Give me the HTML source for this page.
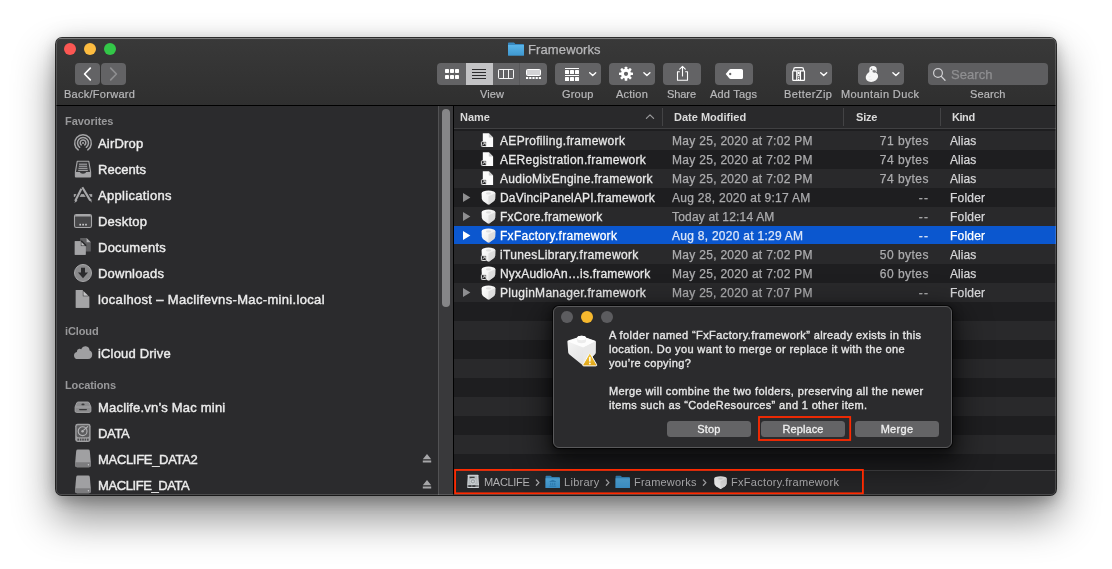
<!DOCTYPE html>
<html lang="en">
<head>
<meta charset="utf-8">
<title>Frameworks</title>
<style>
*{box-sizing:border-box;margin:0;padding:0}
html,body{width:1112px;height:569px;overflow:hidden;background:#fff}
body{font-family:"Liberation Sans",sans-serif;position:relative;color:#dfdfdf;-webkit-font-smoothing:antialiased}
.a{position:absolute}
.t{position:absolute;white-space:nowrap;line-height:1}
/* window */
#shadow{left:56px;top:38px;width:1000px;height:457px;border-radius:6px;
  box-shadow:0 0 0 1px rgba(0,0,0,.8),0 22px 40px 2px rgba(0,0,0,.43),0 6px 14px rgba(0,0,0,.2),0 0 22px rgba(0,0,0,.1)}
#win{left:56px;top:38px;width:1000px;height:457px;border-radius:5px;overflow:hidden;background:#1e1e20}
#pg{left:-56px;top:-38px;width:1112px;height:569px;will-change:transform}
/* toolbar */
#tb{left:56px;top:38px;width:1000px;height:67px;background:linear-gradient(#393939,#2f2f2f);box-shadow:inset 0 1px 0 rgba(255,255,255,.22)}
#tbline{left:56px;top:105px;width:1000px;height:1px;background:#000}
.tl{width:12px;height:12px;border-radius:50%;top:43px}
.btn{background:#636365;border-radius:4px;top:63px;height:22px}
.lbl{font-size:11px;color:#b8b8ba;top:89px;-webkit-text-stroke:.2px #b8b8ba}
/* sidebar */
#sb{left:56px;top:106px;width:382px;height:389px;background:#2b2b2d}
#trk{left:438px;top:106px;width:15px;height:389px;background:#39393b;border-left:1px solid #525254}
#thumb{left:442px;top:109px;width:8px;height:198px;border-radius:4px;background:#868688}
#vline{left:453px;top:106px;width:1px;height:389px;background:#000}
.sh{font-size:11px;font-weight:bold;color:#98989a;left:65px}
.si{font-size:13px;color:#ececec;left:98px;-webkit-text-stroke:.4px #ececec}
.ic{position:absolute}
/* list */
#hdr{left:454px;top:106px;width:602px;height:23px;background:#29292b;border-bottom:1px solid #404042}
.hd{font-size:11px;font-weight:bold;color:#dadada;top:112px}
.hdiv{top:108px;width:1px;height:18px;background:#434345}
.row{left:454px;width:602px;height:19px}
.row.o{background:#29292b}
.row.e{background:#1e1e20}
.row.sel{background:#0b57cf}
.nm{font-size:12px;color:#e8e8e8;left:500px;-webkit-text-stroke:.3px #e8e8e8}
.dt{font-size:12px;color:#acacae;left:672px;-webkit-text-stroke:.25px #acacae}
.sz{font-size:12px;color:#acacae;right:183px;-webkit-text-stroke:.25px #acacae}
.kd{font-size:12px;color:#d6d6d8;left:950px;-webkit-text-stroke:.25px #d6d6d8}
.sel-t{color:#fff;-webkit-text-stroke-color:#fff}
.dt.sel-t,.sz.sel-t{color:#dce6f8;-webkit-text-stroke-color:#dce6f8}
/* path bar */
#pb{left:454px;top:470px;width:602px;height:25px;background:#262628;border-top:1px solid #464648}
.pt{font-size:11px;color:#b0b0b2;top:477px}
/* dialog */
#dlg{left:553px;top:306px;width:399px;height:142px;border-radius:6px;background:#2b2b2d;border:1px solid #59595b;
  box-shadow:0 0 0 1px rgba(0,0,0,.65),0 12px 30px 8px rgba(0,0,0,.5),0 3px 10px 2px rgba(0,0,0,.45)}
.dl{width:12px;height:12px;border-radius:50%;top:311px}
.dtx{font-size:11px;color:#e6e6e6;left:609px;-webkit-text-stroke:.35px #e6e6e6}
.db{top:421px;width:84px;height:16px;border-radius:3.5px;background:#646466;font-size:11px;color:#f0f0f0;text-align:center;line-height:16px;-webkit-text-stroke:.3px #f0f0f0}
</style>
</head>
<body>
<div id="shadow" class="a"></div>
<div id="win" class="a"><div id="pg" class="a">

<!-- TOOLBAR -->
<div id="tb" class="a"></div>
<div id="tbline" class="a"></div>
<div class="a tl" style="left:64px;background:#fc5753"></div>
<div class="a tl" style="left:84px;background:#fdbc40"></div>
<div class="a tl" style="left:104px;background:#33c748"></div>
<!-- back/forward -->
<div class="a btn" style="left:75px;width:25px"></div>
<div class="a btn" style="left:101px;width:25px"></div>
<svg class="a" style="left:75px;top:63px" width="25" height="22" viewBox="0 0 25 22"><path d="M15.3 5.2 L9.6 11 L15.3 16.8" fill="none" stroke="#fff" stroke-width="1.7" stroke-linecap="round" stroke-linejoin="round"/></svg>
<svg class="a" style="left:101px;top:63px" width="25" height="22" viewBox="0 0 25 22"><path d="M9.7 5.2 L15.4 11 L9.7 16.8" fill="none" stroke="#8e8e90" stroke-width="1.7" stroke-linecap="round" stroke-linejoin="round"/></svg>
<div class="t lbl" id="l_bf" style="letter-spacing:0.270px;left:64px">Back/Forward</div>

<!-- title -->
<svg class="a" style="left:508px;top:42px" width="16" height="14" viewBox="0 0 16 14"><defs><linearGradient id="gfo" x1="0" y1="0" x2="0" y2="1"><stop offset="0" stop-color="#5ab5e9"/><stop offset="1" stop-color="#3f98d0"/></linearGradient></defs><path d="M0 1.2 Q0 0.4 .8 0.4 L5.6 0.4 Q6.2 0.4 6.6 1 L7.2 1.9 L15.2 1.9 Q16 1.9 16 2.7 L16 13 Q16 13.6 15.4 13.6 L.6 13.6 Q0 13.6 0 13 Z" fill="#3889c0"/><path d="M0 2.9 L16 2.9 L16 13 Q16 13.6 15.4 13.6 L.6 13.6 Q0 13.6 0 13 Z" fill="url(#gfo)"/></svg>
<div class="t" id="title" style="letter-spacing:0.118px;left:528px;top:43px;font-size:13px;color:#b8b8ba;-webkit-text-stroke:.25px #b8b8ba">Frameworks</div>

<!-- view segmented -->
<div class="a btn" style="left:437px;width:110px"></div>
<div class="a" style="left:466px;top:63px;width:27px;height:22px;background:#c3c3c5"></div>
<div class="a" style="left:519px;top:63px;width:1px;height:22px;background:#58585a"></div>
<svg class="a" style="left:437px;top:63px" width="110" height="22" viewBox="0 0 110 22">
 <g fill="#fff"><rect x="8" y="6" width="4" height="4" rx=".7"/><rect x="13" y="6" width="4" height="4" rx=".7"/><rect x="18" y="6" width="4" height="4" rx=".7"/><rect x="8" y="12" width="4" height="4" rx=".7"/><rect x="13" y="12" width="4" height="4" rx=".7"/><rect x="18" y="12" width="4" height="4" rx=".7"/></g>
 <g fill="#2c2c2e"><rect x="35" y="6" width="14" height="1"/><rect x="35" y="9" width="14" height="1"/><rect x="35" y="12" width="14" height="1"/><rect x="35" y="15" width="14" height="1"/></g>
 <g fill="none" stroke="#fff" stroke-width=".95"><rect x="61.5" y="6.5" width="15" height="9" rx=".7"/><path d="M66.5 6.5V15.5M71.5 6.5V15.5"/></g>
 <rect x="89.5" y="6.5" width="14" height="6" rx="1" fill="#d4d4d6" stroke="#fff" stroke-width="1"/>
 <g fill="#fff"><rect x="89" y="14" width="2.2" height="2"/><rect x="92.2" y="14" width="2.2" height="2"/><rect x="95.4" y="14" width="2.2" height="2"/><rect x="98.6" y="14" width="2.2" height="2"/><rect x="101.8" y="14" width="2.2" height="2"/></g>
</svg>
<div class="t lbl" id="l_view" style="letter-spacing:0.136px;left:480px">View</div>

<!-- group -->
<div class="a btn" style="left:555px;width:46px"></div>
<svg class="a" style="left:555px;top:63px" width="46" height="22" viewBox="0 0 46 22">
 <g fill="#fff"><rect x="10" y="5" width="14" height="1"/><rect x="10" y="12" width="14" height="1"/>
 <rect x="10" y="7" width="4" height="4" rx=".6"/><rect x="15" y="7" width="4" height="4" rx=".6"/><rect x="20" y="7" width="4" height="4" rx=".6"/>
 <rect x="10" y="14" width="4" height="4" rx=".6"/><rect x="15" y="14" width="4" height="4" rx=".6"/><rect x="20" y="14" width="4" height="4" rx=".6"/></g>
 <path d="M34.7 9.7 L37.7 12.5 L40.7 9.7" fill="none" stroke="#fff" stroke-width="1.4" stroke-linecap="round" stroke-linejoin="round"/>
</svg>
<div class="t lbl" id="l_group" style="letter-spacing:0.184px;left:562px">Group</div>

<!-- action -->
<div class="a btn" style="left:609px;width:46px"></div>
<svg class="a" style="left:609px;top:63px" width="46" height="22" viewBox="0 0 46 22">
 <g transform="translate(17 10.8)" fill="#fff">
  <g id="teeth"><rect x="-1.3" y="-7" width="2.6" height="3.4" rx=".5"/><rect x="-1.3" y="3.6" width="2.6" height="3.4" rx=".5"/></g>
  <g transform="rotate(45)"><rect x="-1.3" y="-7" width="2.6" height="3.4" rx=".5"/><rect x="-1.3" y="3.6" width="2.6" height="3.4" rx=".5"/></g>
  <g transform="rotate(90)"><rect x="-1.3" y="-7" width="2.6" height="3.4" rx=".5"/><rect x="-1.3" y="3.6" width="2.6" height="3.4" rx=".5"/></g>
  <g transform="rotate(135)"><rect x="-1.3" y="-7" width="2.6" height="3.4" rx=".5"/><rect x="-1.3" y="3.6" width="2.6" height="3.4" rx=".5"/></g>
  <path fill-rule="evenodd" d="M0 -5 A5 5 0 1 0 0 5 A5 5 0 1 0 0 -5 Z M0 -2.1 A2.1 2.1 0 1 1 0 2.1 A2.1 2.1 0 1 1 0 -2.1 Z"/>
 </g>
 <path d="M34.9 9.7 L37.9 12.5 L40.9 9.7" fill="none" stroke="#fff" stroke-width="1.4" stroke-linecap="round" stroke-linejoin="round"/>
</svg>
<div class="t lbl" id="l_action" style="letter-spacing:0.237px;left:616px">Action</div>

<!-- share -->
<div class="a btn" style="left:663px;width:38px"></div>
<svg class="a" style="left:663px;top:63px" width="38" height="22" viewBox="0 0 38 22">
 <path d="M16.8 8.7 H14.5 V17.3 H24.5 V8.7 H22.2" fill="none" stroke="#fff" stroke-width="1.1" stroke-linejoin="round"/>
 <path d="M19.5 13 V3.6 M16.7 6.2 L19.5 3.4 L22.3 6.2" fill="none" stroke="#fff" stroke-width="1.1" stroke-linecap="round" stroke-linejoin="round"/>
</svg>
<div class="t lbl" id="l_share" style="letter-spacing:-0.072px;left:667px">Share</div>

<!-- add tags -->
<div class="a btn" style="left:715px;width:38px"></div>
<svg class="a" style="left:715px;top:63px" width="38" height="22" viewBox="0 0 38 22">
 <path fill-rule="evenodd" d="M10.7 11 L14.2 6.7 Q14.8 6 15.8 6 L26.4 6 Q28 6 28 7.6 L28 14.4 Q28 16 26.4 16 L15.8 16 Q14.8 16 14.2 15.3 Z M15.2 9.8 a1.2 1.2 0 1 0 0.01 0 Z" fill="#fff"/>
</svg>
<div class="t lbl" id="l_tags" style="letter-spacing:0.191px;left:710px">Add Tags</div>

<!-- betterzip -->
<div class="a btn" style="left:786px;width:46px"></div>
<svg class="a" style="left:786px;top:63px" width="46" height="22" viewBox="0 0 46 22">
 <rect x="7.6" y="9" width="2.6" height="7.6" fill="#505052"/><rect x="15.2" y="9" width="2.6" height="7.6" fill="#505052"/>
 <g fill="none" stroke="#fff" stroke-width="1.25" stroke-linejoin="round">
  <rect x="6.75" y="7.95" width="11.7" height="9.3" rx=".6"/>
  <path d="M7.7 7.9 V6.5 Q7.7 4.7 9.5 4.7 H15.7 Q17.5 4.7 17.5 6.5 V7.9"/>
  <path d="M10.7 8 V17.2 M14.5 8 V17.2" stroke-width="1.1"/>
 </g>
 <path fill-rule="evenodd" d="M11.4 9 H13.8 V13.2 H11.4 Z M12.1 10.9 H13.1 V12.2 H12.1 Z" fill="#fff"/>
 <rect x="12" y="14.1" width="1.2" height="1.1" fill="#fff"/><rect x="12" y="15.9" width="1.2" height="1.1" fill="#fff"/>
 <path d="M34.7 9.7 L37.7 12.5 L40.7 9.7" fill="none" stroke="#fff" stroke-width="1.4" stroke-linecap="round" stroke-linejoin="round"/>
</svg>
<div class="t lbl" id="l_bz" style="letter-spacing:0.418px;left:784px">BetterZip</div>

<!-- mountain duck -->
<div class="a btn" style="left:858px;width:46px"></div>
<svg class="a" style="left:858px;top:63px" width="46" height="22" viewBox="0 0 46 22">
 <ellipse cx="13.9" cy="13.7" rx="6.3" ry="5.1" transform="rotate(-18 13.9 13.7)" fill="#f6f6f6"/>
 <circle cx="15" cy="6.8" r="3.75" fill="#f6f6f6"/>
 <path d="M11.6 8 Q11.6 10.4 10.4 11 L17 10.6 Q18.6 9.6 18.4 8 Z" fill="#f6f6f6"/>
 <path d="M14.4 7.6 Q16 6.6 17.6 7.4 Q18.4 8.2 17.8 9.4 Q16 10 14.8 9.2 Z" fill="#7c7c7e"/>
 <circle cx="13.6" cy="6.2" r=".65" fill="#6a6a6c"/>
 <path d="M10.6 13.6 Q11.8 14.2 12.6 13.6 M10.8 16.4 Q12.4 17.2 13.8 16.2" fill="none" stroke="#dcdcdc" stroke-width=".5"/>
 <path d="M34.9 9.7 L37.9 12.5 L40.9 9.7" fill="none" stroke="#fff" stroke-width="1.4" stroke-linecap="round" stroke-linejoin="round"/>
</svg>
<div class="t lbl" id="l_md" style="letter-spacing:0.394px;left:841px">Mountain Duck</div>

<!-- search -->
<div class="a" style="left:928px;top:63px;width:120px;height:22px;border-radius:4px;background:#5e5e60"></div>
<svg class="a" style="left:928px;top:63px" width="24" height="22" viewBox="0 0 24 22"><circle cx="10" cy="10" r="4.4" fill="none" stroke="#d2d2d4" stroke-width="1.2"/><path d="M13.3 13.4 L17 17.2" stroke="#d2d2d4" stroke-width="1.3" stroke-linecap="round"/></svg>
<div class="t" id="srch" style="letter-spacing:0.066px;left:951px;top:68px;font-size:13px;color:#8f8f91;-webkit-text-stroke:.25px #8f8f91">Search</div>
<div class="t lbl" id="l_search" style="letter-spacing:0.123px;left:970px">Search</div>


<!-- SIDEBAR -->
<div id="sb" class="a"></div>
<div id="trk" class="a"></div>
<div id="thumb" class="a"></div>
<div id="vline" class="a"></div>
<div class="t sh" id="h_fav" style="letter-spacing:-0.058px;top:116px">Favorites</div>
<div class="t sh" id="h_icl" style="letter-spacing:-0.120px;top:326px">iCloud</div>
<div class="t sh" id="h_loc" style="letter-spacing:-0.117px;top:380px">Locations</div>

<!-- airdrop -->
<svg class="a" style="left:73px;top:133px" width="20" height="20" viewBox="0 0 20 20"><g fill="none" stroke="#a4a4a6" stroke-width="1.5" stroke-linecap="round">
<path d="M5.2 16.9 A8.3 8.3 0 1 1 14.8 16.9"/><path d="M6.7 14.3 A5.5 5.5 0 1 1 13.3 14.3"/><path d="M8.2 11.9 A2.8 2.8 0 1 1 11.8 11.9"/></g><circle cx="10" cy="10" r="1.1" fill="#a0a0a2"/></svg>
<div class="t si" id="s1" style="letter-spacing:0.189px;top:137px">AirDrop</div>

<!-- recents -->
<svg class="a" style="left:73px;top:160px" width="20" height="18" viewBox="0 0 20 18"><path d="M4.2 1.3 H15.8 L17.6 11.8 V16.4 Q17.6 16.9 17.1 16.9 H2.9 Q2.4 16.9 2.4 16.4 V11.8 Z" fill="#38383a" stroke="#a6a6a8" stroke-width="1.1" stroke-linejoin="round"/><g fill="#b6b6b8"><rect x="6" y="3.7" width="8" height=".95"/><rect x="5.9" y="5.75" width="8.2" height=".95"/><rect x="5.5" y="7.8" width="9" height=".95"/><rect x="5.2" y="9.85" width="9.6" height=".95"/></g><path d="M2.4 11.9 H6.8 Q7.3 13.7 10 13.7 Q12.7 13.7 13.2 11.9 H17.6 V16.4 Q17.6 16.9 17.1 16.9 H2.9 Q2.4 16.9 2.4 16.4 Z" fill="#a6a6a8"/></svg>
<div class="t si" id="s2" style="letter-spacing:0.057px;top:163px">Recents</div>

<!-- applications -->
<svg class="a" style="left:73px;top:186px" width="20" height="18" viewBox="0 0 20 18"><rect x=".8" y="8.1" width="18.4" height="2.8" fill="#a2a2a4"/><g fill="none" stroke="#2b2b2d" stroke-width="4.2"><path d="M8.3 3 L2.4 14.6"/><path d="M9.4 1.4 L17.4 14.8"/></g><g fill="none" stroke="#a8a8aa" stroke-width="2.1"><path d="M8.4 2.8 L2.2 15"/><path d="M9.3 1.2 L17.2 14.4"/></g><path d="M2.9 13.6 L1.3 17 L4.5 14.8 Z" fill="#a8a8aa"/><path d="M16.2 13.6 L18.6 16.8 L18.4 13.2 Z" fill="#a8a8aa"/></svg>
<div class="t si" id="s3" style="letter-spacing:0.308px;top:189px">Applications</div>

<!-- desktop -->
<svg class="a" style="left:73px;top:213px" width="20" height="16" viewBox="0 0 20 16"><rect x="1.5" y="1.5" width="17" height="13" rx="1.8" fill="#464648" stroke="#a6a6a8" stroke-width="1.1"/><path d="M2 3.4 V3 Q2 2 3 2 H17 Q18 2 18 3 V3.4 Z" fill="#a6a6a8"/><g fill="#d0d0d2"><rect x="6.4" y="10.8" width="1.6" height="1.7"/><rect x="9.3" y="10.8" width="1.6" height="1.7"/><rect x="12.2" y="10.8" width="1.6" height="1.7"/></g></svg>
<div class="t si" id="s4" style="letter-spacing:0.228px;top:215px">Desktop</div>

<!-- documents -->
<svg class="a" style="left:73px;top:237px" width="20" height="19" viewBox="0 0 20 19"><path d="M7.2 1 H13.6 L17.8 5.2 V14.4 H7.2 Z" fill="#5e5e60"/><path d="M13.6 1 L17.8 5.2 H13.6 Z" fill="#b4b4b6"/><path d="M1.8 4.2 H8.4 L12.6 8.4 V17.8 H1.8 Z" fill="#a4a4a6"/><path d="M7.6 3.4 H9 L13.4 7.8 V9.2 H7.6 Z" fill="#2b2b2d"/><path d="M8.4 4.9 L11.9 8.4 H8.4 Z" fill="#c4c4c6"/><path d="M1.8 4.2 H7.6 V9.2 H12.6 V17.8 H1.8 Z" fill="#a4a4a6"/></svg>
<div class="t si" id="s5" style="letter-spacing:0.250px;top:241px">Documents</div>

<!-- downloads -->
<svg class="a" style="left:73px;top:263px" width="20" height="20" viewBox="0 0 20 20"><circle cx="10" cy="10" r="8.5" fill="#8a8a8c" stroke="#a8a8aa" stroke-width="1"/><path d="M8 4.8 H12 V9.6 H15 L10 15.2 L5 9.6 H8 Z" fill="#2b2b2d"/></svg>
<div class="t si" id="s6" style="letter-spacing:0.208px;top:267px">Downloads</div>

<!-- localhost file -->
<svg class="a" style="left:75px;top:289px" width="16" height="19" viewBox="0 0 16 19"><path d="M.8 1 H8.4 L14.2 6.8 V18.8 H.8 Z" fill="#a4a4a6"/><path d="M7.6 .2 H9 L15 6.2 V7.6 H7.6 Z" fill="#2b2b2d"/><path d="M8.4 1.9 L13.3 6.8 H8.4 Z" fill="#c4c4c6"/><path d="M.8 1 H7.6 V7.6 H14.2 V18.8 H.8 Z" fill="#a4a4a6"/></svg>
<div class="t si" id="s7" style="letter-spacing:0.333px;top:293px">localhost – Maclifevns-Mac-mini.local</div>

<!-- icloud -->
<svg class="a" style="left:73px;top:345px" width="20" height="15" viewBox="0 0 20 15"><path d="M5 14 Q1 14 1 10.4 Q1 7.6 3.8 7 Q3.8 4.4 6.2 3.8 Q7.4 3.6 8.2 4.2 Q9.6 1 12.8 1.2 Q16.4 1.6 16.6 5.6 Q19.2 6.4 19.2 9.6 Q19.2 14 15 14 Z" fill="#a0a0a2"/></svg>
<div class="t si" id="s8" style="letter-spacing:0.166px;top:347px">iCloud Drive</div>

<!-- mac mini -->
<svg class="a" style="left:73px;top:401px" width="20" height="13" viewBox="0 0 20 13"><path d="M5.2 1 H14.8 Q15.8 1 16.3 2 L17.9 6 V10 Q17.9 11.4 16.5 11.4 H3.5 Q2.1 11.4 2.1 10 V6 L3.7 2 Q4.2 1 5.2 1 Z" fill="#8c8c8e" stroke="#a8a8aa" stroke-width=".9"/><path d="M2.6 6 H17.4" stroke="#a8a8aa" stroke-width=".9"/><rect x="6" y="7.9" width="8" height="1.4" rx=".7" fill="#38383a"/><ellipse cx="10" cy="3.4" rx="1.6" ry=".9" fill="#38383a"/></svg>
<div class="t si" id="s9" style="letter-spacing:0.195px;top:401px">Maclife.vn’s Mac mini</div>

<!-- DATA hdd -->
<svg class="a" style="left:74px;top:423px" width="18" height="20" viewBox="0 0 18 20"><rect x="1.2" y=".8" width="15.4" height="18.2" rx="2.4" fill="#a0a0a2"/><rect x="2.6" y="2.2" width="12.6" height="12" rx="1.4" fill="#5c5c5e"/><circle cx="8.6" cy="8.2" r="4.4" fill="none" stroke="#b4b4b6" stroke-width="1.1"/><circle cx="8.6" cy="8.2" r="1.3" fill="#b4b4b6"/><path d="M9.4 7.4 L14 3.4" stroke="#b4b4b6" stroke-width="1.2"/><g fill="#4a4a4c"><rect x="3.4" y="15.6" width="1.6" height="2"/><rect x="5.8" y="15.6" width="1.6" height="2"/><rect x="8.2" y="15.6" width="1.6" height="2"/><rect x="10.6" y="15.6" width="1.6" height="2"/><rect x="13" y="15.6" width="1.6" height="2"/></g></svg>
<div class="t si" id="s10" style="letter-spacing:-0.337px;top:427px">DATA</div>

<!-- ext drives -->
<svg class="a" style="left:74px;top:449px" width="18" height="19" viewBox="0 0 18 19"><path d="M3.8 .6 H14.2 Q15.6 .6 15.8 2 L16.8 13 V16.4 Q16.8 18.2 15 18.2 H3 Q1.2 18.2 1.2 16.4 V13 L2.2 2 Q2.4 .6 3.8 .6 Z" fill="#a0a0a2"/><path d="M1.2 13.2 H16.8 V16.4 Q16.8 18.2 15 18.2 H3 Q1.2 18.2 1.2 16.4 Z" fill="#7c7c7e"/><circle cx="14.4" cy="15.8" r=".7" fill="#c8c8ca"/></svg>
<div class="t si" id="s11" style="letter-spacing:-0.311px;top:453px">MACLIFE_DATA2</div>
<svg class="a" style="left:74px;top:475px" width="18" height="19" viewBox="0 0 18 19"><path d="M3.8 .6 H14.2 Q15.6 .6 15.8 2 L16.8 13 V16.4 Q16.8 18.2 15 18.2 H3 Q1.2 18.2 1.2 16.4 V13 L2.2 2 Q2.4 .6 3.8 .6 Z" fill="#a0a0a2"/><path d="M1.2 13.2 H16.8 V16.4 Q16.8 18.2 15 18.2 H3 Q1.2 18.2 1.2 16.4 Z" fill="#7c7c7e"/><circle cx="14.4" cy="15.8" r=".7" fill="#c8c8ca"/></svg>
<div class="t si" id="s12" style="letter-spacing:-0.411px;top:479px">MACLIFE_DATA</div>

<!-- eject -->
<svg class="a" style="left:422px;top:453px" width="10" height="11" viewBox="0 0 10 11"><path d="M5 1 L9.2 6.2 H.8 Z M.8 7.6 H9.2 V9.4 H.8 Z" fill="#a6a6a8"/></svg>
<svg class="a" style="left:422px;top:479px" width="10" height="11" viewBox="0 0 10 11"><path d="M5 1 L9.2 6.2 H.8 Z M.8 7.6 H9.2 V9.4 H.8 Z" fill="#a6a6a8"/></svg>


<!-- LIST -->
<svg width="0" height="0" style="position:absolute"><defs>
<linearGradient id="gfo2" x1="0" y1="0" x2="0" y2="1"><stop offset="0" stop-color="#52aade"/><stop offset="1" stop-color="#3c90c8"/></linearGradient><linearGradient id="gfw" x1="0" y1="0" x2="1" y2="1"><stop offset="0" stop-color="#ffffff"/><stop offset="1" stop-color="#e6e6e6"/></linearGradient>
<g id="i_fw"><path d="M2.2 1.4 Q7.5 -.2 12.8 1.4 Q14.4 1.9 14.4 3.4 L14.2 8.6 Q14 10.4 12.4 11.6 L8.2 14.4 Q7.5 14.8 6.8 14.4 L2.6 11.6 Q1 10.4 .8 8.6 L.6 3.4 Q.6 1.9 2.2 1.4 Z" fill="url(#gfw)"/><path d="M7.5 14.7 L7.5 6.2 L14.3 3.2 L14.2 8.6 Q14 10.4 12.4 11.6 L8.2 14.4 Q7.9 14.6 7.5 14.7Z" fill="#d6d6d6" opacity=".7"/><ellipse cx="7.5" cy="3.4" rx="2.6" ry="1.1" fill="#d9d9d9" opacity=".8"/></g>
<g id="i_doc"><path d="M2.8 .2 H8.8 L13.1 4.5 V14 H2.8 Z" fill="#fbfbfb"/><path d="M8.8 .2 L13.1 4.5 H8.8 Z" fill="#cdcdcd"/></g>
<g id="i_al" transform="translate(.5 0)"><rect x=".9" y="8.7" width="4.8" height="4.8" rx=".8" fill="#1c1c1e" stroke="#f2f2f2" stroke-width=".9"/><path d="M2.2 12.4 Q2.4 10.8 4.2 10.5 M3 9.9 H4.7 V11.6" fill="none" stroke="#f2f2f2" stroke-width=".85"/></g>
</defs></svg>
<div id="hdr" class="a"></div>
<div class="t hd" id="hd_name" style="letter-spacing:-0.017px;left:460px">Name</div>
<div class="t hd" id="hd_date" style="letter-spacing:0.006px;left:674px">Date Modified</div>
<div class="t hd" id="hd_size" style="letter-spacing:-0.179px;left:856px">Size</div>
<div class="t hd" id="hd_kind" style="letter-spacing:-0.438px;left:952px">Kind</div>
<div class="a hdiv" style="left:662px"></div>
<div class="a hdiv" style="left:843px"></div>
<div class="a hdiv" style="left:940px"></div>
<svg class="a" style="left:645px;top:113px" width="10" height="7" viewBox="0 0 10 7"><path d="M1.4 5.4 L5 1.8 L8.6 5.4" fill="none" stroke="#9a9a9c" stroke-width="1.2" stroke-linecap="round" stroke-linejoin="round"/></svg>
<div class="a row o" style="top:131px"></div>
<div class="a row e" style="top:150px"></div>
<div class="a row o" style="top:169px"></div>
<div class="a row e" style="top:188px"></div>
<div class="a row o" style="top:207px"></div>
<div class="a row sel" style="top:226px;height:18px"></div>
<div class="a row o" style="top:244px;height:20px"></div>
<div class="a row e" style="top:264px"></div>
<div class="a row o" style="top:283px"></div>
<div class="a row e" style="top:302px"></div>
<div class="a row o" style="top:321px"></div>
<div class="a row e" style="top:340px"></div>
<div class="a row o" style="top:359px"></div>
<div class="a row e" style="top:378px"></div>
<div class="a row o" style="top:397px"></div>
<div class="a row e" style="top:416px"></div>
<div class="a row o" style="top:435px"></div>
<div class="a row e" style="top:454px"></div>
<svg class="a" style="left:480px;top:133px" width="15" height="15" viewBox="0 0 15 15"><use href="#i_doc"/><use href="#i_al"/></svg>
<div class="t nm" id="n0" style="letter-spacing:0.309px;top:135px">AEProfiling.framework</div>
<div class="t dt" id="d0" style="letter-spacing:0.296px;top:135px">May 25, 2020 at 7:02 PM</div>
<div class="t sz" id="z0" style="letter-spacing:0.478px;top:135px">71 bytes</div>
<div class="t kd" id="k0" style="letter-spacing:0.057px;top:135px">Alias</div>
<svg class="a" style="left:480px;top:152px" width="15" height="15" viewBox="0 0 15 15"><use href="#i_doc"/><use href="#i_al"/></svg>
<div class="t nm" id="n1" style="letter-spacing:0.280px;top:154px">AERegistration.framework</div>
<div class="t dt" id="d1" style="letter-spacing:0.296px;top:154px">May 25, 2020 at 7:02 PM</div>
<div class="t sz" id="z1" style="letter-spacing:0.478px;top:154px">74 bytes</div>
<div class="t kd" id="k1" style="letter-spacing:0.057px;top:154px">Alias</div>
<svg class="a" style="left:480px;top:171px" width="15" height="15" viewBox="0 0 15 15"><use href="#i_doc"/><use href="#i_al"/></svg>
<div class="t nm" id="n2" style="letter-spacing:0.285px;top:173px">AudioMixEngine.framework</div>
<div class="t dt" id="d2" style="letter-spacing:0.296px;top:173px">May 25, 2020 at 7:02 PM</div>
<div class="t sz" id="z2" style="letter-spacing:0.478px;top:173px">74 bytes</div>
<div class="t kd" id="k2" style="letter-spacing:0.057px;top:173px">Alias</div>
<svg class="a" style="left:462px;top:192px" width="9" height="11" viewBox="0 0 9 11"><path d="M1 1 L8.4 5.5 L1 10 Z" fill="#8e8e90"/></svg>
<svg class="a" style="left:481px;top:190px" width="15" height="15" viewBox="0 0 15 15"><use href="#i_fw"/></svg>
<div class="t nm" id="n3" style="letter-spacing:0.175px;top:192px">DaVinciPanelAPI.framework</div>
<div class="t dt" id="d3" style="letter-spacing:0.278px;top:192px">Aug 28, 2020 at 9:17 AM</div>
<div class="t sz" id="z3" style="letter-spacing:1.1px;top:192px">--</div>
<div class="t kd" id="k3" style="letter-spacing:0.197px;top:192px">Folder</div>
<svg class="a" style="left:462px;top:211px" width="9" height="11" viewBox="0 0 9 11"><path d="M1 1 L8.4 5.5 L1 10 Z" fill="#8e8e90"/></svg>
<svg class="a" style="left:481px;top:209px" width="15" height="15" viewBox="0 0 15 15"><use href="#i_fw"/></svg>
<div class="t nm" id="n4" style="letter-spacing:0.238px;top:211px">FxCore.framework</div>
<div class="t dt" id="d4" style="letter-spacing:0.182px;top:211px">Today at 12:14 AM</div>
<div class="t sz" id="z4" style="letter-spacing:1.1px;top:211px">--</div>
<div class="t kd" id="k4" style="letter-spacing:0.197px;top:211px">Folder</div>
<svg class="a" style="left:462px;top:230px" width="9" height="11" viewBox="0 0 9 11"><path d="M1 1 L8.4 5.5 L1 10 Z" fill="#fff"/></svg>
<svg class="a" style="left:481px;top:228px" width="15" height="15" viewBox="0 0 15 15"><use href="#i_fw"/></svg>
<div class="t nm sel-t" id="n5" style="letter-spacing:0.284px;top:230px">FxFactory.framework</div>
<div class="t dt sel-t" id="d5" style="letter-spacing:0.271px;top:230px">Aug 8, 2020 at 1:29 AM</div>
<div class="t sz sel-t" id="z5" style="letter-spacing:1.1px;top:230px">--</div>
<div class="t kd sel-t" id="k5" style="letter-spacing:0.197px;top:230px">Folder</div>
<svg class="a" style="left:480px;top:247px" width="16" height="15" viewBox="-1 0 16 15"><use href="#i_fw"/><g transform="translate(-1 0)"><use href="#i_al"/></g></svg>
<div class="t nm" id="n6" style="letter-spacing:0.343px;top:249px">iTunesLibrary.framework</div>
<div class="t dt" id="d6" style="letter-spacing:0.296px;top:249px">May 25, 2020 at 7:02 PM</div>
<div class="t sz" id="z6" style="letter-spacing:0.478px;top:249px">50 bytes</div>
<div class="t kd" id="k6" style="letter-spacing:0.057px;top:249px">Alias</div>
<svg class="a" style="left:480px;top:266px" width="16" height="15" viewBox="-1 0 16 15"><use href="#i_fw"/><g transform="translate(-1 0)"><use href="#i_al"/></g></svg>
<div class="t nm" id="n7" style="letter-spacing:0.189px;top:268px">NyxAudioAn…is.framework</div>
<div class="t dt" id="d7" style="letter-spacing:0.296px;top:268px">May 25, 2020 at 7:02 PM</div>
<div class="t sz" id="z7" style="letter-spacing:0.478px;top:268px">60 bytes</div>
<div class="t kd" id="k7" style="letter-spacing:0.057px;top:268px">Alias</div>
<svg class="a" style="left:462px;top:287px" width="9" height="11" viewBox="0 0 9 11"><path d="M1 1 L8.4 5.5 L1 10 Z" fill="#8e8e90"/></svg>
<svg class="a" style="left:481px;top:285px" width="15" height="15" viewBox="0 0 15 15"><use href="#i_fw"/></svg>
<div class="t nm" id="n8" style="letter-spacing:0.291px;top:287px">PluginManager.framework</div>
<div class="t dt" id="d8" style="letter-spacing:0.287px;top:287px">May 25, 2020 at 7:07 PM</div>
<div class="t sz" id="z8" style="letter-spacing:1.1px;top:287px">--</div>
<div class="t kd" id="k8" style="letter-spacing:0.197px;top:287px">Folder</div>

<!-- PATHBAR -->
<div id="pb" class="a"></div>
<!-- hdd -->
<svg class="a" style="left:466px;top:474px" width="14" height="15" viewBox="0 0 14 15"><path d="M2.4 .8 H11.8 Q12.3 .8 12.4 1.3 L13.1 13 Q13.1 13.9 12.3 13.9 H1.9 Q1.1 13.9 1.1 13 L1.8 1.3 Q1.9 .8 2.4 .8 Z" fill="#cfd3d6"/><path d="M2.9 1.7 H11.3 L11.9 10.6 H2.3 Z" fill="#b4b9bc"/><rect x="3.6" y="2.7" width="5" height="1.5" fill="#3a3c3e"/><circle cx="6.9" cy="7.3" r="2.7" fill="#9ea4a7" stroke="#dfe3e5" stroke-width=".6"/><circle cx="6.9" cy="7.3" r=".9" fill="#d4d8da"/><path d="M1.5 11.2 H12.7 L12.8 12.8 H1.4 Z" fill="#5a5c5e"/><rect x="2.6" y="11.5" width="2.6" height="1.1" fill="#1c1c1e"/><rect x="6.4" y="11.5" width="3" height="1.1" fill="#1c1c1e"/></svg>
<div class="t pt" id="p1" style="letter-spacing:-0.312px;left:484px">MACLIFE</div>
<svg class="a" style="left:534px;top:478px" width="7" height="9" viewBox="0 0 7 9"><path d="M2.4 2 L4.9 4.6 L2.4 7.2" fill="none" stroke="#a6a6a8" stroke-width="1.35" stroke-linecap="round" stroke-linejoin="round"/></svg>
<!-- library folder -->
<svg class="a" style="left:545.3px;top:475px" width="15.3" height="13.8" viewBox="0 0 16 14" preserveAspectRatio="none"><path d="M.6 1.6 Q.6 .8 1.4 .8 L5.6 .8 Q6.2 .8 6.6 1.3 L7.2 2.1 L14.8 2.1 Q15.6 2.1 15.6 2.9 L15.6 12.6 Q15.6 13.2 15 13.2 L1.2 13.2 Q.6 13.2 .6 12.6 Z" fill="#3587bf"/><path d="M.6 3.4 L15.6 3.4 L15.6 12.6 Q15.6 13.2 15 13.2 L1.2 13.2 Q.6 13.2 .6 12.6 Z" fill="url(#gfo2)"/><path d="M8.1 4.8 L11.6 6.6 V7.2 H4.6 V6.6 Z M5.4 7.8 H6.6 V10.4 H5.4 Z M7.5 7.8 H8.7 V10.4 H7.5 Z M9.6 7.8 H10.8 V10.4 H9.6 Z M4.6 10.9 H11.6 V11.8 H4.6 Z" fill="#2f7fb6"/></svg>
<div class="t pt" id="p2" style="letter-spacing:0.282px;left:564px">Library</div>
<svg class="a" style="left:604px;top:478px" width="7" height="9" viewBox="0 0 7 9"><path d="M2.4 2 L4.9 4.6 L2.4 7.2" fill="none" stroke="#a6a6a8" stroke-width="1.35" stroke-linecap="round" stroke-linejoin="round"/></svg>
<!-- frameworks folder -->
<svg class="a" style="left:615.3px;top:475px" width="15.3" height="13.8" viewBox="0 0 16 14" preserveAspectRatio="none"><path d="M.6 1.6 Q.6 .8 1.4 .8 L5.6 .8 Q6.2 .8 6.6 1.3 L7.2 2.1 L14.8 2.1 Q15.6 2.1 15.6 2.9 L15.6 12.6 Q15.6 13.2 15 13.2 L1.2 13.2 Q.6 13.2 .6 12.6 Z" fill="#3587bf"/><path d="M.6 3.4 L15.6 3.4 L15.6 12.6 Q15.6 13.2 15 13.2 L1.2 13.2 Q.6 13.2 .6 12.6 Z" fill="url(#gfo2)"/></svg>
<div class="t pt" id="p3" style="letter-spacing:0.218px;left:634px">Frameworks</div>
<svg class="a" style="left:701px;top:478px" width="7" height="9" viewBox="0 0 7 9"><path d="M2.4 2 L4.9 4.6 L2.4 7.2" fill="none" stroke="#a6a6a8" stroke-width="1.35" stroke-linecap="round" stroke-linejoin="round"/></svg>
<svg class="a" style="left:713px;top:475px" width="15" height="15" viewBox="0 0 15 15"><g transform="translate(.6 .6) scale(.92)"><use href="#i_fw"/></g></svg>
<div class="t pt" id="p4" style="letter-spacing:0.306px;left:731px">FxFactory.framework</div>
<svg class="a" style="left:452px;top:467px;z-index:9" width="416" height="30" viewBox="0 0 416 30"><rect x="3.1" y="2.9" width="407.8" height="23.4" fill="none" stroke="#ff2a00" stroke-width="1.8"/></svg>


<!-- DIALOG -->
<div id="dlg" class="a"></div>
<div class="a dl" style="left:561px;background:#5c5c5f"></div>
<div class="a dl" style="left:581px;background:#f6b82e"></div>
<div class="a dl" style="left:601px;background:#5c5c5f"></div>
<!-- brick icon -->
<svg class="a" style="left:565px;top:333px" width="34" height="36" viewBox="0 0 34 36">
<defs><linearGradient id="gb1" x1="0" y1="0" x2="1" y2="1"><stop offset="0" stop-color="#f6f6f6"/><stop offset="1" stop-color="#dcdcdc"/></linearGradient><linearGradient id="gw" x1="0" y1="0" x2="0" y2="1"><stop offset="0" stop-color="#f4c838"/><stop offset="1" stop-color="#dfa418"/></linearGradient></defs>
<path d="M3 7.6 L15.4 3.4 Q16.6 3 17.8 3.4 L30.2 7.8 Q30.8 8.1 30.8 8.8 L30.6 19.6 Q30.6 20.6 29.8 21.2 L19.4 32 Q18.4 32.8 17.4 32 L4.4 21.4 Q3.4 20.6 3.2 19.4 L2.4 8.8 Q2.4 7.9 3 7.6 Z" fill="url(#gb1)"/>
<path d="M2.6 8.4 L16.8 3.2 L30.6 8.2 L18.4 14.6 Z" fill="#fdfdfd"/>
<path d="M18.4 14.6 L30.7 8.4 L30.6 19.6 Q30.6 20.6 29.8 21.2 L19.4 32 Q18.9 32.4 18.4 32.5 Z" fill="#e9e9e9"/>
<ellipse cx="16.6" cy="5" rx="4.4" ry="2.2" fill="#fbfbfb"/><path d="M12.2 5 V8 Q12.2 10.2 16.6 10.2 Q21 10.2 21 8 V5 Z" fill="#ececec"/><ellipse cx="16.6" cy="5" rx="4.4" ry="2.2" fill="#ffffff"/>
<path d="M24.2 20.8 Q24.8 19.8 25.4 20.8 L31.6 31.6 Q32.2 32.9 30.8 32.9 L18.8 32.9 Q17.4 32.9 18 31.6 Z" fill="url(#gw)" stroke="#fafafa" stroke-width="1"/>
<rect x="24.1" y="23.8" width="1.5" height="5" rx=".7" fill="#fff"/><circle cx="24.85" cy="30.5" r=".9" fill="#fff"/>
</svg>
<div class="t dtx" id="x1" style="letter-spacing:0.399px;top:330px">A folder named “FxFactory.framework” already exists in this</div>
<div class="t dtx" id="x2" style="letter-spacing:0.378px;top:344px">location. Do you want to merge or replace it with the one</div>
<div class="t dtx" id="x3" style="letter-spacing:0.336px;top:358px">you’re copying?</div>
<div class="t dtx" id="x4" style="letter-spacing:0.383px;top:386px">Merge will combine the two folders, preserving all the newer</div>
<div class="t dtx" id="x5" style="letter-spacing:0.347px;top:400px">items such as “CodeResources” and 1 other item.</div>
<div class="a db" style="left:667px"><span id="b1" style="letter-spacing:0.165px">Stop</span></div>
<div class="a db" style="left:761px"><span id="b2" style="letter-spacing:0.120px">Replace</span></div>
<div class="a db" style="left:855px"><span id="b3" style="letter-spacing:0.302px">Merge</span></div>
<svg class="a" style="left:756px;top:414px;z-index:9" width="98" height="30" viewBox="0 0 98 30"><rect x="3" y="3" width="91.2" height="23" fill="none" stroke="#ff2a00" stroke-width="1.8"/></svg>


<div class="a" style="left:56px;top:38px;width:1000px;height:457px;border-radius:5px;box-shadow:inset 0 0 0 1px rgba(255,255,255,.16);pointer-events:none"></div>
</div></div>
</body>
</html>
